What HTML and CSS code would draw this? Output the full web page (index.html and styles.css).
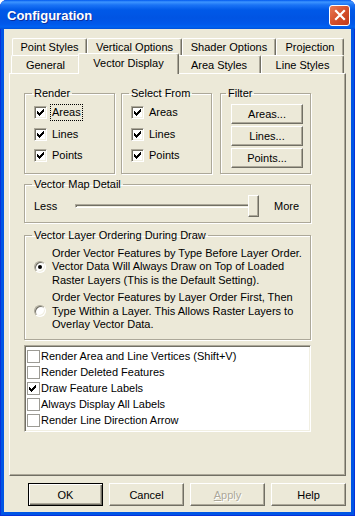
FILE: index.html
```html
<!DOCTYPE html>
<html lang="en">
<head>
    <meta charset="UTF-8">
    <meta name="viewport" content="width=device-width, initial-scale=1.0">
    <title>Configuration</title>
    <link rel="stylesheet" href="styles.css">
</head>
<body>
    <div class="window">
        <div class="titlebar">
            <span class="title">Configuration</span>
            <span class="close-btn">
                <svg width="12" height="12" viewBox="0 0 12 12">
                    <path d="M2 2 L10 10 M10 2 L2 10" stroke="#fff" stroke-width="2.2" stroke-linecap="square"></path>
                </svg>
            </span>
        </div>

        <div class="client">
            <div class="tab-row back">
                <div class="tab tab-point">Point Styles</div>
                <div class="tab tab-vertical">Vertical Options</div>
                <div class="tab tab-shader">Shader Options</div>
                <div class="tab tab-projection">Projection</div>
            </div>
            <div class="tab-row front">
                <div class="tab tab-general">General</div>
                <div class="tab tab-vector selected">Vector Display</div>
                <div class="tab tab-area">Area Styles</div>
                <div class="tab tab-line">Line Styles</div>
            </div>

            <div class="panel">
                <div class="group-row">
                    <fieldset class="group group-small">
                        <legend>Render</legend>
                        <div class="check-row">
                            <span class="check3d"><svg width="9" height="9" viewBox="0 0 9 9"><path d="M1 3h1v3h-1zM2 4h1v3h-1zM3 5h1v3h-1zM4 4h1v3h-1zM5 3h1v3h-1zM6 2h1v3h-1zM7 1h1v3h-1z" fill="#000"></path></svg></span>
                            <span class="check-label focused">Areas</span>
                        </div>
                        <div class="check-row">
                            <span class="check3d"><svg width="9" height="9" viewBox="0 0 9 9"><path d="M1 3h1v3h-1zM2 4h1v3h-1zM3 5h1v3h-1zM4 4h1v3h-1zM5 3h1v3h-1zM6 2h1v3h-1zM7 1h1v3h-1z" fill="#000"></path></svg></span>
                            <span class="check-label">Lines</span>
                        </div>
                        <div class="check-row">
                            <span class="check3d"><svg width="9" height="9" viewBox="0 0 9 9"><path d="M1 3h1v3h-1zM2 4h1v3h-1zM3 5h1v3h-1zM4 4h1v3h-1zM5 3h1v3h-1zM6 2h1v3h-1zM7 1h1v3h-1z" fill="#000"></path></svg></span>
                            <span class="check-label">Points</span>
                        </div>
                    </fieldset>

                    <fieldset class="group group-small">
                        <legend>Select From</legend>
                        <div class="check-row">
                            <span class="check3d"><svg width="9" height="9" viewBox="0 0 9 9"><path d="M1 3h1v3h-1zM2 4h1v3h-1zM3 5h1v3h-1zM4 4h1v3h-1zM5 3h1v3h-1zM6 2h1v3h-1zM7 1h1v3h-1z" fill="#000"></path></svg></span>
                            <span class="check-label">Areas</span>
                        </div>
                        <div class="check-row">
                            <span class="check3d"><svg width="9" height="9" viewBox="0 0 9 9"><path d="M1 3h1v3h-1zM2 4h1v3h-1zM3 5h1v3h-1zM4 4h1v3h-1zM5 3h1v3h-1zM6 2h1v3h-1zM7 1h1v3h-1z" fill="#000"></path></svg></span>
                            <span class="check-label">Lines</span>
                        </div>
                        <div class="check-row">
                            <span class="check3d"><svg width="9" height="9" viewBox="0 0 9 9"><path d="M1 3h1v3h-1zM2 4h1v3h-1zM3 5h1v3h-1zM4 4h1v3h-1zM5 3h1v3h-1zM6 2h1v3h-1zM7 1h1v3h-1z" fill="#000"></path></svg></span>
                            <span class="check-label">Points</span>
                        </div>
                    </fieldset>

                    <fieldset class="group group-small group-filter">
                        <legend>Filter</legend>
                        <button class="btn btn-filter">Areas...</button>
                        <button class="btn btn-filter">Lines...</button>
                        <button class="btn btn-filter">Points...</button>
                    </fieldset>
                </div>

                <fieldset class="group group-detail">
                    <legend>Vector Map Detail</legend>
                    <div class="slider-row">
                        <span class="slider-less">Less</span>
                        <div class="slider">
                            <div class="slider-track"></div>
                            <div class="slider-thumb"></div>
                        </div>
                        <span class="slider-more">More</span>
                    </div>
                </fieldset>

                <fieldset class="group group-order">
                    <legend>Vector Layer Ordering During Draw</legend>
                    <div class="radio-row">
                        <span class="radio"><span class="radio-dot"></span></span>
                        <span class="radio-label">Order Vector Features by Type Before Layer Order.<br>Vector Data Will Always Draw on Top of Loaded<br>Raster Layers (This is the Default Setting).</span>
                    </div>
                    <div class="radio-row">
                        <span class="radio"></span>
                        <span class="radio-label">Order Vector Features by Layer Order First, Then<br>Type Within a Layer. This Allows Raster Layers to<br>Overlay Vector Data.</span>
                    </div>
                </fieldset>

                <div class="listbox">
                    <div class="list-item"><span class="check-flat"></span><span>Render Area and Line Vertices (Shift+V)</span></div>
                    <div class="list-item"><span class="check-flat"></span><span>Render Deleted Features</span></div>
                    <div class="list-item"><span class="check-flat"><svg width="11" height="11" viewBox="0 0 11 11"><path d="M1 4h1v3h-1zM2 5h1v3h-1zM3 6h1v3h-1zM4 5h1v3h-1zM5 4h1v3h-1zM6 3h1v3h-1zM7 2h1v3h-1z" fill="#000"></path></svg></span><span>Draw Feature Labels</span></div>
                    <div class="list-item"><span class="check-flat"></span><span>Always Display All Labels</span></div>
                    <div class="list-item"><span class="check-flat"></span><span>Render Line Direction Arrow</span></div>
                </div>
            </div>

            <div class="dialog-buttons">
                <button class="btn btn-dialog default">OK</button>
                <button class="btn btn-dialog">Cancel</button>
                <button class="btn btn-dialog disabled"><u>A</u>pply</button>
                <button class="btn btn-dialog">Help</button>
            </div>
        </div>
    </div>
</body>
</html>
```

FILE: styles.css
```css
* {
    box-sizing: border-box;
}
body {
    margin: 0;
    font-family: "Liberation Sans", Arial, sans-serif;
    font-size: 11px;
    color: #000;
    background: #fff;
}
.window {
    width: 355px;
    height: 516px;
    background: #0055e5;
    box-shadow: inset 1px 0 #0831d9, inset -1px 0 #0831d9, inset 0 -1px #0831d9;
    border-radius: 7px 7px 0 0;
    overflow: hidden;
}
.titlebar {
    height: 29px;
    display: flex;
    align-items: center;
    justify-content: space-between;
    padding: 1px 5px 0 7px;
    background: linear-gradient(to bottom, #0058ee 0, #3d95ff 2px, #1a73f5 5px, #0059e8 10px, #0054e3 18px, #0058eb 24px, #0062f2 27px, #0050d8 29px);
}
.title {
    color: #fff;
    font-weight: bold;
    font-size: 13px;
    text-shadow: 1px 1px #0a2fa0;
}
.close-btn {
    width: 21px;
    height: 21px;
    border: 1px solid #fff;
    border-radius: 3px;
    background: linear-gradient(to bottom right, #e87a57, #d5502b 50%, #c0391a);
    display: flex;
    align-items: center;
    justify-content: center;
}
.client {
    height: 483px;
    margin: 0 4px;
    background: #ece9d8;
    padding: 9px 5px 0;
}

/* tabs */
.tab-row {
    display: flex;
}
.tab-row.back {
    height: 17px;
    padding-left: 3px;
}
.tab-row.front {
    height: 18px;
    padding-left: 2px;
}
.tab {
    display: flex;
    align-items: center;
    justify-content: center;
    white-space: nowrap;
    background: #ece9d8;
    border-top: 1px solid #fff;
    border-left: 1px solid #fff;
    border-right: 1px solid #716f64;
    box-shadow: inset -1px 0 #aca899;
    border-radius: 2px 2px 0 0;
}
.tab-point { width: 75px; }
.tab-vertical { width: 95px; }
.tab-shader { width: 94px; }
.tab-projection { width: 68px; }
.tab-general { width: 69px; }
.tab-vector { width: 97px; }
.tab-area { width: 84px; }
.tab-line { width: 83px; }
.tab.selected {
    width: 101px;
    height: 21px;
    margin: -2px -2px -1px;
    padding-bottom: 3px;
    position: relative;
    z-index: 1;
}

.panel {
    height: 403px;
    border-top: 1px solid #fff;
    border-left: 1px solid #fff;
    border-right: 1px solid #716f64;
    border-bottom: 1px solid #716f64;
    box-shadow: inset -1px -1px #aca899;
    padding: 13px 0 0 14px;
}

/* group boxes */
.group {
    margin: 0;
    padding: 2px 6px 0 9px;
    border: 1px solid #aca899;
    box-shadow: 1px 1px #fff, inset 1px 1px #fff;
    min-width: 0;
}
.group legend {
    padding: 0 2px;
    margin-left: -2px;
    line-height: 13px;
}
.group-row {
    display: flex;
}
.group-small {
    width: 91px;
    height: 87px;
    margin-right: 6px;
}
.group-small.group-filter {
    margin-left: 2px;
    padding: 4px 0 0 10px;
}
.group-filter legend {
    margin-left: -5px;
}
.check-row {
    display: flex;
    align-items: center;
    height: 21.5px;
}
.check3d {
    width: 13px;
    height: 13px;
    flex: none;
    background: #fff;
    border: 1px solid;
    border-color: #aca899 #fff #fff #aca899;
    box-shadow: inset 1px 1px #716f64, inset -1px -1px #f1efe2;
    padding: 1px;
}
.check3d svg {
    display: block;
    shape-rendering: crispEdges;
}
.check-label {
    margin-left: 4px;
    padding: 1px;
    line-height: 13px;
}
.check-label.focused {
    outline: 1px dotted #000;
}

/* buttons */
.btn {
    font: inherit;
    color: #000;
    background: #ece9d8;
    border: 1px solid;
    border-color: #fff #716f64 #716f64 #fff;
    box-shadow: inset -1px -1px #aca899;
    border-radius: 0;
    padding: 0;
    display: block;
}
.btn-filter {
    width: 72px;
    height: 20px;
    margin-bottom: 2px;
}
.dialog-buttons {
    display: flex;
    justify-content: flex-end;
    gap: 6px;
    margin-top: 7px;
}
.btn-dialog {
    width: 75px;
    height: 23px;
}
.btn-dialog.default {
    border-color: #000;
    box-shadow: inset 1px 1px #fff, inset -1px -1px #716f64, inset -2px -2px #aca899;
}
.btn-dialog.disabled {
    color: #aca899;
    text-shadow: 1px 1px #fff;
}

/* slider */
.group-detail {
    width: 287px;
    height: 45px;
    margin-top: 4px;
    padding-top: 4px;
}
.slider-row {
    display: flex;
    align-items: center;
    height: 22px;
}
.slider-less {
    width: 36px;
}
.slider {
    position: relative;
    width: 193px;
    height: 22px;
    display: flex;
    align-items: center;
}
.slider-track {
    flex: 1;
    margin: 0 5px;
    height: 4px;
    border: 1px solid;
    border-color: #aca899 #fff #fff #aca899;
    box-shadow: inset 1px 1px #716f64, inset -1px -1px #f1efe2;
}
.slider-thumb {
    position: absolute;
    right: 4px;
    top: 0;
    width: 11px;
    height: 22px;
    background: #ece9d8;
    border: 1px solid;
    border-color: #fff #716f64 #716f64 #fff;
    box-shadow: inset -1px -1px #aca899;
}
.slider-more {
    margin-left: 11px;
}

/* radio options */
.group-order {
    width: 287px;
    height: 111px;
    margin-top: 6px;
    padding-top: 4.5px;
}
.radio-row {
    display: flex;
    align-items: center;
    margin-bottom: 4px;
}
.radio {
    width: 12px;
    height: 12px;
    flex: none;
    border-radius: 50%;
    background: #fff;
    border: 1px solid;
    border-color: #aca899 #fff #fff #aca899;
    box-shadow: inset 1px 1px #716f64, inset -1px -1px #f1efe2;
    display: flex;
    align-items: center;
    justify-content: center;
}
.radio-dot {
    width: 4px;
    height: 4px;
    border-radius: 50%;
    background: #000;
}
.radio-label {
    margin-left: 6px;
    line-height: 13.5px;
    white-space: nowrap;
}

/* check list */
.listbox {
    width: 287px;
    height: 87px;
    margin-top: 5px;
    background: #fff;
    border: 1px solid;
    border-color: #aca899 #fff #fff #aca899;
    box-shadow: inset 1px 1px #716f64, inset -1px -1px #f1efe2;
    padding: 2px 0 0 2px;
}
.list-item {
    display: flex;
    align-items: center;
    height: 16px;
    white-space: nowrap;
}
.check-flat {
    width: 13px;
    height: 13px;
    flex: none;
    margin-right: 1px;
    background: #fff;
    border: 1px solid #9c9b95;
}
.check-flat svg {
    display: block;
    shape-rendering: crispEdges;
}
```
